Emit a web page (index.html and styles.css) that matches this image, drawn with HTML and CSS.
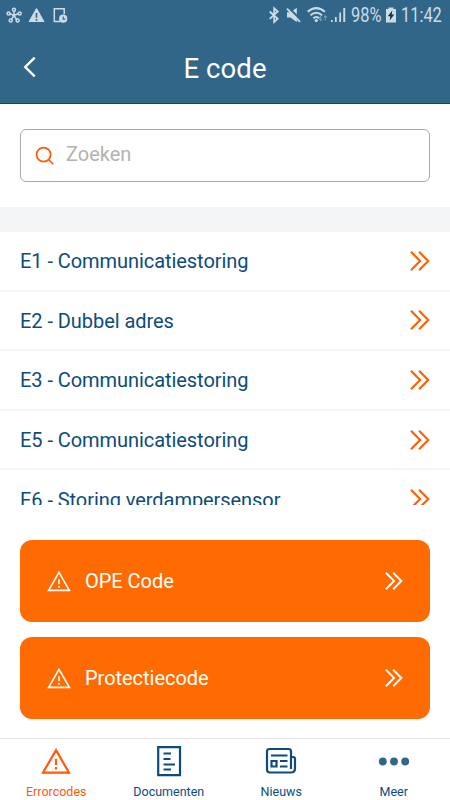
FILE: index.html
```
<!DOCTYPE html>
<html lang="nl">
<head>
<meta charset="utf-8">
<title>E code</title>
<link rel="stylesheet" href="styles.css">
</head>
<body>
<svg class="defs" aria-hidden="true">
  <symbol id="chevrons" viewBox="0 0 20 20"><path d="M1 .8 10.100 10 1 19.200M9.100 .8 18.200 10 9.100 19.200"/></symbol>
  <symbol id="warning" viewBox="0 0 30 27"><path d="M15 2.600 28 25.200H2ZM15 11.300v6.400M15 19.600v2.300"/></symbol>
</svg>
<div class="app">
  <header class="header">
    <div class="status">
      <svg class="status-left" viewBox="0 0 70 30" width="70" height="30">
        <g class="line">
          <path d="M14 15.500V11M14 15.500 9.500 13.500M14 15.500l4.500-2M14 15.500l-2.600 4M14 15.500l2.600 4"/>
          <circle cx="14" cy="9.700" r="1.500"/><circle cx="8.600" cy="13.500" r="1.500"/><circle cx="19.700" cy="13.500" r="1.500"/><circle cx="10.700" cy="20.500" r="1.500"/><circle cx="17.600" cy="20.500" r="1.500"/>
        </g>
        <path class="solid" d="M35.800 8.700q.7-1.100 1.400 0l7.100 12.500q.4.800-.5.800H29.300q-.9 0-.5-.8Z"/>
        <path class="cut" d="M36.500 13v4.700M36.500 19v1.700"/>
        <path class="line" d="M60 21.500H54.300V8.800H64.200V14"/>
        <circle class="solid" cx="63.200" cy="18.700" r="4.100"/>
        <path class="cut thin" d="M63.200 16.400v2.700h2"/>
      </svg>
      <div class="status-right">
        <svg viewBox="268 0 82 30" width="82" height="30">
          <path class="line heavy" d="m269.700 11.500 8 7.300-3.500 3.200V8.300l3.500 3.200-8 7.300"/>
          <path class="solid" d="M287 12.300h3.500l6.300-4.500v14.500l-6.300-4.800H287Z"/>
          <path class="gap" d="m288.300 7.300 13 13.200"/>
          <path class="line heavy" d="m287 8.600 13 13.200"/>
          <g class="line arc"><path d="M307.700 11.800q8.600-7.400 17.200 0M310.500 15.200q5.800-5 11.600 0M313.300 18.300q3-2.600 6 0"/></g>
          <circle class="solid" cx="316.300" cy="20.500" r="1.600"/>
          <path class="faint" d="M320.700 16v4.500m-1.700-1.600 1.700 1.900 1.700-1.900M325.300 20.500v-4.800m-1.700 1.800 1.700-1.900 1.700 1.900"/>
          <path class="solid" d="M331 20h1.700v2H331ZM335 17h1.700v5H335ZM339.300 12.500h1.700V22h-1.700ZM343.300 8h1.900v14h-1.900Z"/>
        </svg>
        <span class="status-text battery-level">98%</span>
        <svg viewBox="0 0 12 30" width="12" height="30"><path class="solid" d="M3.500 7.500h5V9H11v13.500H1V9h2.500Z"/><path class="bolt" d="M7.300 10.500 2.800 16.300h2.500L4.700 20.500 9.200 14.600H6.700Z"/></svg>
        <span class="status-text clock">11:42</span>
      </div>
    </div>
    <div class="titlebar">
      <svg class="back" viewBox="0 0 14 22" width="14" height="22"><path d="M11.700 1.700 2.300 11l9.400 9.300"/></svg>
      <h1>E code</h1>
    </div>
  </header>

  <div class="search">
    <svg viewBox="0 0 20 20" width="20" height="20"><circle cx="8.600" cy="8.600" r="7"/><path d="m13.500 13.500 4.700 4.600"/></svg>
    <span>Zoeken</span>
  </div>

  <main class="list">
    <div class="row"><span>E1 - Communicatiestoring</span><svg class="chev"><use href="#chevrons"/></svg></div>
    <div class="row"><span>E2 - Dubbel adres</span><svg class="chev"><use href="#chevrons"/></svg></div>
    <div class="row"><span>E3 - Communicatiestoring</span><svg class="chev"><use href="#chevrons"/></svg></div>
    <div class="row"><span>E5 - Communicatiestoring</span><svg class="chev"><use href="#chevrons"/></svg></div>
    <div class="row"><span>E6 - Storing verdampersensor</span><svg class="chev"><use href="#chevrons"/></svg></div>
  </main>

  <section class="actions">
    <div class="action"><svg class="warn"><use href="#warning"/></svg><span>OPE Code</span><svg class="chev"><use href="#chevrons"/></svg></div>
    <div class="action"><svg class="warn"><use href="#warning"/></svg><span>Protectiecode</span><svg class="chev"><use href="#chevrons"/></svg></div>
  </section>

  <nav class="tabs">
    <div class="tab active"><svg viewBox="0 0 30 27" width="30" height="32"><use href="#warning"/></svg><span>Errorcodes</span></div>
    <div class="tab"><svg viewBox="0 0 32 32" width="32" height="32"><path d="M5.200 2.200H27V30.200H5.200ZM10.500 8.500H18M10.500 14h7M10.500 19.500H22M10.500 24.500H18"/></svg><span>Documenten</span></div>
    <div class="tab"><svg viewBox="0 0 32 32" width="32" height="32"><path d="M26 24V6.500q0-2.500-2.500-2.500H4.500Q2 4 2 6.500v18q0 3 3 3h21q4 0 4-4V14q0-2-2-2h-2M6 10.500h16.500M6.500 16h5v5.500h-5ZM15 16h7.500M15 21.500h7.500"/></svg><span>Nieuws</span></div>
    <div class="tab"><svg viewBox="0 0 32 32" width="32" height="32"><g class="dots"><circle cx="4.800" cy="16.500" r="3.900"/><circle cx="16" cy="16.500" r="3.900"/><circle cx="27.200" cy="16.500" r="3.900"/></g></svg><span>Meer</span></div>
  </nav>
</div>
</body>
</html>
```
FILE: styles.css
```
* { box-sizing: border-box; }
body { margin: 0; background: #fff; font-family: Roboto, "Liberation Sans", sans-serif; color: #0c4c7c; }
svg { display: block; flex: none; fill: none; stroke: currentColor; }
.defs { position: absolute; width: 0; height: 0; }
.app { width: 450px; height: 800px; display: flex; flex-direction: column; overflow: hidden; }

.header { height: 104px; flex: none; background: #326688; border-bottom: 1px solid #07487a; color: #fff; }
.status { height: 31px; display: flex; justify-content: space-between; color: #ccdce7; }
.status-right { width: 182px; display: flex; }
.status .line { stroke-width: 1.5; }
.status .heavy { stroke-width: 1.8; }
.status .arc { stroke-width: 2; }
.status .solid { fill: currentColor; stroke: none; }
.status .cut { stroke: #326688; stroke-width: 1.7; }
.status .thin { stroke-width: 1.2; }
.status .gap { stroke: #326688; stroke-width: 2; }
.status .faint { stroke: #80a4bb; stroke-width: 1; }
.status .bolt { fill: #153040; stroke: none; }
.status-text { font-size: 20px; line-height: 31px; white-space: nowrap; transform-origin: 0 50%; transform: scaleX(.82); }
.battery-level { width: 35px; margin-left: 1px; margin-right: -1px; }
.clock { margin-left: 4px; width: 46px; transform: scaleX(.82); }
.titlebar { height: 72px; display: grid; grid-template-columns: 24px 1fr 24px; align-items: center; }
.back { justify-self: end; stroke-width: 2.4; margin-right: -13px; margin-top: 0; }
h1 { margin: 4px 0 0; text-align: center; font-size: 27.5px; line-height: 32px; font-weight: 400; letter-spacing: .1px; }

.search { height: 53px; flex: none; margin: 25px 20px; border: 1.5px solid #aaa; border-radius: 6px; padding-left: 14px; display: flex; align-items: center; gap: 11px; color: #b3b3b3; font-size: 20px; }
.search svg { color: #ff5a0a; stroke-width: 1.7; margin-top: 0; }
.search span { margin-top: -3px; }

.list { height: 298px; flex: none; border-top: 25px solid #f4f5f7; overflow: hidden; }
.row { height: 59.6px; border-bottom: 2.4px solid #f5f5f8; padding: 0 20px; display: flex; align-items: center; justify-content: space-between; font-size: 20px; letter-spacing: -.06px; }
.row .chev { width: 20px; height: 20px; color: #ff6100; stroke-width: 2.2; }
.row span { margin-top: 1px; }

.actions { padding: 35px 20px 0; display: flex; flex-direction: column; gap: 15px; }
.action { height: 82px; border-radius: 12px; background: #ff6b00; color: #fff; padding: 0 27px; display: flex; align-items: center; font-size: 20px; letter-spacing: -.03px; }
.action .warn { width: 24px; height: 22px; stroke-width: 2; margin-top: -1px; }
.action span { margin-left: 14px; }
.action .chev { width: 18px; height: 18px; margin-left: auto; stroke-width: 2.1; }

.tabs { margin-top: auto; height: 62px; border-top: 1px solid #e2e2e2; display: grid; grid-template-columns: repeat(4, 1fr); }
.tab { display: flex; flex-direction: column; align-items: center; padding-top: 6px; font-size: 12.5px; line-height: 16px; }
.tab svg { stroke-width: 2.2; }
.tab span { margin-top: 7px; }
.active { color: #ff5a0a; }
.dots { fill: #326688; stroke: none; }
```
